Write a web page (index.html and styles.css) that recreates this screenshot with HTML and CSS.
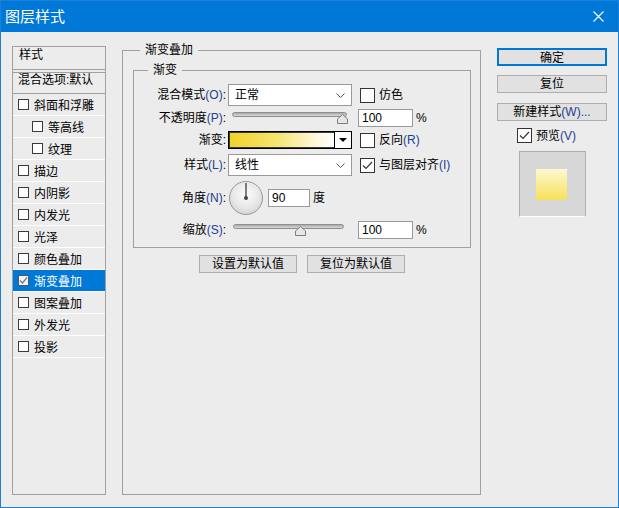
FILE: index.html
```html
<!DOCTYPE html>
<html lang="zh-CN">
<head>
    <meta charset="UTF-8">
    <meta name="viewport" content="width=device-width, initial-scale=1.0">
    <title>图层样式</title>
    <link rel="stylesheet" href="styles.css">
</head>
<body>
    <div class="window">
     <div class="titlebar">
      <span class="title">图层样式</span>
      <svg class="close" width="11" height="11" viewBox="0 0 11 11"><path d="M0.5 0.5L10.5 10.5M10.5 0.5L0.5 10.5" stroke="#fff" stroke-width="1.1" fill="none"/></svg>
     </div>
     <div class="content">
      <div class="list">
       <div class="list-head">样式</div>
       <div class="list-default">混合选项:默认</div>
       <div class="item"><span class="cb"></span>斜面和浮雕</div>
       <div class="item sub"><span class="cb"></span>等高线</div>
       <div class="item sub"><span class="cb"></span>纹理</div>
       <div class="item"><span class="cb"></span>描边</div>
       <div class="item"><span class="cb"></span>内阴影</div>
       <div class="item"><span class="cb"></span>内发光</div>
       <div class="item"><span class="cb"></span>光泽</div>
       <div class="item"><span class="cb"></span>颜色叠加</div>
       <div class="item active"><span class="cb"><svg width="9" height="9" viewBox="0 0 9 9"><path d="M1 4.5L3.5 7L8 1.5" stroke="#777" stroke-width="1.2" fill="none"/></svg></span>渐变叠加</div>
       <div class="item"><span class="cb"></span>图案叠加</div>
       <div class="item"><span class="cb"></span>外发光</div>
       <div class="item"><span class="cb"></span>投影</div>
      </div>

      <fieldset class="group">
       <legend>渐变叠加</legend>
       <fieldset class="sub-group">
        <legend>渐变</legend>
        <div class="form">
         <div class="lbl">混合模式<span class="mn">(O)</span>:</div>
         <div class="select"><span>正常</span><svg width="9" height="5" viewBox="0 0 9 5"><path d="M0.5 0.5L4.5 4.5L8.5 0.5" stroke="#555" fill="none"/></svg></div>
         <div class="check"><span class="chk"></span>仿色</div>

         <div class="lbl">不透明度<span class="mn">(P)</span>:</div>
         <div class="slider">
          <div class="track"></div>
          <svg class="thumb" style="left: 105px" width="11" height="10" viewBox="0 0 11 10"><polygon points="5.5,0.5 10.5,5 10.5,9.5 0.5,9.5 0.5,5" fill="#e6e6e6" stroke="#7d7d7d"/></svg>
         </div>
         <div class="field"><div class="num">100</div><span class="unit">%</span></div>

         <div class="lbl">渐变:</div>
         <div class="grad"><div class="grad-fill"></div><div class="grad-arrow"><svg width="8" height="4" viewBox="0 0 8 4"><polygon points="0,0 8,0 4,4" fill="#000"/></svg></div></div>
         <div class="check"><span class="chk"></span>反向<span class="mn">(R)</span></div>

         <div class="lbl">样式<span class="mn">(L)</span>:</div>
         <div class="select"><span>线性</span><svg width="9" height="5" viewBox="0 0 9 5"><path d="M0.5 0.5L4.5 4.5L8.5 0.5" stroke="#555" fill="none"/></svg></div>
         <div class="check"><span class="chk"><svg width="13" height="13" viewBox="0 0 13 13"><path d="M2 6.5L5 9.5L11 3" stroke="#333" stroke-width="1.2" fill="none"/></svg></span>与图层对齐<span class="mn">(I)</span></div>

         <div class="lbl">角度<span class="mn">(N)</span>:</div>
         <div class="angle">
          <svg class="dial" width="34" height="34" viewBox="0 0 34 34">
           <defs><radialGradient id="dialbg" cx="50%" cy="40%" r="60%"><stop offset="0" stop-color="#fcfcfc"/><stop offset="0.7" stop-color="#e6e6e6"/><stop offset="1" stop-color="#d2d2d2"/></radialGradient></defs>
           <circle cx="17" cy="17" r="16.5" fill="url(#dialbg)" stroke="#9a9a9a"/>
           <line x1="17" y1="2" x2="17" y2="17" stroke="#555" stroke-width="1.5"/>
           <circle cx="17" cy="17" r="2" fill="#444"/>
          </svg>
          <div class="num small">90</div><span class="unit">度</span>
         </div>

         <div class="lbl">缩放<span class="mn">(S)</span>:</div>
         <div class="slider short">
          <div class="track"></div>
          <svg class="thumb" style="left: 62px" width="11" height="10" viewBox="0 0 11 10"><polygon points="5.5,0.5 10.5,5 10.5,9.5 0.5,9.5 0.5,5" fill="#e6e6e6" stroke="#7d7d7d"/></svg>
         </div>
         <div class="field"><div class="num">100</div><span class="unit">%</span></div>
        </div>
       </fieldset>
       <div class="defaults">
        <button class="btn">设置为默认值</button>
        <button class="btn">复位为默认值</button>
       </div>
      </fieldset>

      <div class="side">
       <button class="btn wide primary">确定</button>
       <button class="btn wide">复位</button>
       <button class="btn wide last">新建样式<span class="mn">(W)...</span></button>
       <div class="preview-check"><span class="chk"><svg width="13" height="13" viewBox="0 0 13 13"><path d="M2 6.5L5 9.5L11 3" stroke="#333" stroke-width="1.2" fill="none"/></svg></span>预览<span class="mn">(V)</span></div>
       <div class="preview"><div class="swatch"></div></div>
      </div>
     </div>
    </div>
</body>
</html>
```

FILE: styles.css
```css
*{
    margin: 0;
    padding: 0;
    box-sizing: border-box;
}
html,body{
    width: 100%;
    height: 100%;
}
body{
    font-family: "Liberation Sans", "Noto Sans CJK SC", sans-serif;
    font-size: 12px;
    color: #000;
    background-color: #ececec;
}
.window{
    width: 619px;
    height: 508px;
    border: 1px solid #1a80d8;
    background-color: #ececec;
    display: flex;
    flex-direction: column;
}
.titlebar{
    height: 31px;
    flex-shrink: 0;
    background-color: #0078d7;
    color: white;
    display: flex;
    align-items: center;
    justify-content: space-between;
    padding: 0 14px 0 4px;
}
.title{
    font-size: 15px;
    line-height: 31px;
}
.mn{
    color: #24408e;
}
.content{
    display: flex;
    align-items: flex-start;
    padding: 10px 0 0 11px;
}

/* left list */
.list{
    width: 94px;
    height: 449px;
    margin-top: 4px;
    border: 1px solid #a0a0a0;
}
.list-head{
    height: 23px;
    line-height: 16px;
    padding-left: 6px;
    border-bottom: 1px solid #a0a0a0;
}
.list-default{
    height: 22px;
    margin-top: 2px;
    line-height: 13px;
    padding: 1px 0 0 5px;
    border-top: 1px solid #a0a0a0;
    border-bottom: 1px solid #a0a0a0;
    white-space: nowrap;
}
.item{
    height: 22px;
    display: flex;
    align-items: center;
    padding-left: 5px;
    border-bottom: 1px solid #fff;
}
.item.sub{
    padding-left: 19px;
}
.item.active{
    background-color: #0078d7;
    color: white;
}
.cb{
    width: 11px;
    height: 11px;
    border: 1px solid #3a3a3a;
    background-color: #fff;
    margin-right: 5px;
    display: flex;
    align-items: center;
    justify-content: center;
}
.item.active .cb{
    border-color: #555;
    background-color: #f2f2f2;
}

/* main group */
.group{
    width: 359px;
    height: 453px;
    margin-left: 16px;
    border: 1px solid #a0a0a0;
    padding: 4px 9px 0 10px;
    min-width: 0;
}
.group > legend{
    margin-left: 7px;
    padding: 0 5px;
    line-height: 16px;
}
.sub-group{
    border: 1px solid #a0a0a0;
    padding: 6px 0 3px 0;
    min-width: 0;
}
.sub-group > legend{
    margin-left: 14px;
    padding: 0 5px;
    line-height: 16px;
}
.form{
    display: grid;
    grid-template-columns: 94px 124px 1fr;
    grid-template-rows: 22px 24px 20px 30px 36px 28px;
    align-items: center;
}
.lbl{
    text-align: right;
    padding-right: 2px;
    line-height: 16px;
    white-space: nowrap;
}
.select{
    height: 22px;
    border: 1px solid #9a9a9a;
    background-color: #fff;
    display: flex;
    align-items: center;
    justify-content: space-between;
    padding: 0 6px;
    line-height: 16px;
}
.check{
    display: flex;
    align-items: center;
    margin-left: 8px;
    line-height: 16px;
    white-space: nowrap;
}
.chk{
    width: 15px;
    height: 15px;
    border: 1px solid #333;
    background-color: #fff;
    margin-right: 4px;
    display: flex;
    align-items: center;
    justify-content: center;
    flex-shrink: 0;
}
.slider{
    position: relative;
    width: 115px;
    height: 12px;
    margin-left: 4px;
}
.slider.short{
    width: 111px;
    margin-left: 5px;
}
.track{
    height: 5px;
    border: 1px solid #8e8e8e;
    border-radius: 3px;
    background: linear-gradient(#a9a9a9, #d9d9d9);
}
.thumb{
    position: absolute;
    top: 2px;
}
.field{
    display: flex;
    align-items: center;
    margin-left: 6px;
}
.num{
    width: 55px;
    height: 18px;
    border: 1px solid #9a9a9a;
    background-color: #fff;
    padding-left: 3px;
    line-height: 16px;
}
.num.small{
    width: 42px;
    margin-left: 5px;
}
.unit{
    margin-left: 3px;
    line-height: 16px;
}
.grad{
    width: 124px;
    height: 18px;
    border: 1px solid #000;
    display: flex;
}
.grad-fill{
    flex: 1;
    border: 1px solid #3a3a3a;
    border-right: none;
    background: linear-gradient(to right, #f1d22b, #f6e46f 45%, #fdf7da 82%, #ffffff);
}
.grad-arrow{
    width: 17px;
    border-left: 1px solid #000;
    background-color: #fff;
    display: flex;
    align-items: center;
    justify-content: center;
}
.angle{
    grid-column: 2 / 4;
    display: flex;
    align-items: center;
    margin-left: 1px;
}
.defaults{
    display: flex;
    justify-content: center;
    gap: 10px;
    margin-top: 7px;
}

/* buttons */
.btn{
    width: 98px;
    height: 18px;
    border: 1px solid #adadad;
    background-color: #e1e1e1;
    font: inherit;
    color: #000;
    line-height: 16px;
}

/* right side */
.side{
    width: 110px;
    margin-left: 16px;
    margin-top: 6px;
}
.btn.wide{
    display: block;
    width: 110px;
    margin-bottom: 10px;
}
.btn.primary{
    border: 2px solid #0078d7;
    margin-bottom: 9px;
}
.btn.wide.last{
    margin-bottom: 7px;
}
.preview-check{
    display: flex;
    align-items: center;
    height: 15px;
    padding-left: 20px;
    line-height: 16px;
}
.preview{
    width: 67px;
    height: 66px;
    margin: 8px 0 0 22px;
    border: 1px solid #acacac;
    border-bottom-color: #fff;
    background-color: #d7d7d7;
    padding: 17px 0 0 16px;
}
.swatch{
    width: 31px;
    height: 31px;
    background: linear-gradient(#fdf8d2, #f6e05a);
}
```
